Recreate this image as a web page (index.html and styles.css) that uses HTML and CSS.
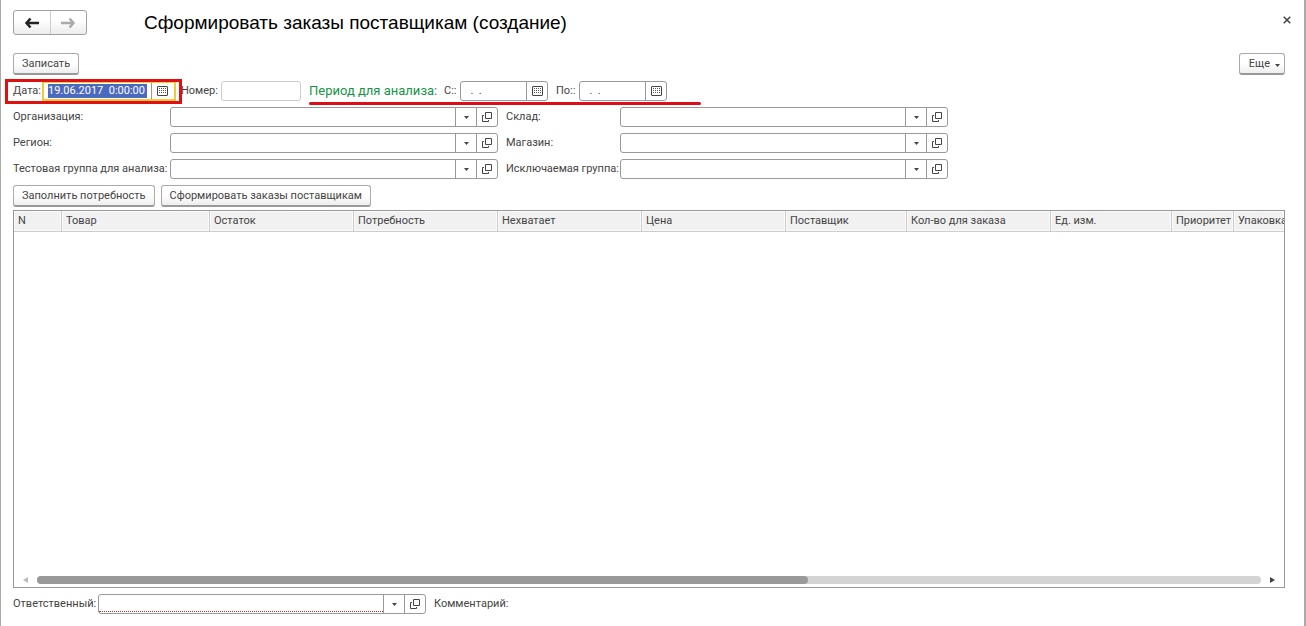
FILE: index.html
```html
<!DOCTYPE html>
<html lang="ru">
<head>
<meta charset="utf-8">
<title>Сформировать заказы поставщикам (создание)</title>
<link rel="stylesheet" href="styles.css">
</head>
<body>
<svg class="defs" aria-hidden="true">
  <symbol id="calendar" viewBox="0 0 11 10">
    <rect x="0.5" y="0.5" width="10" height="9" rx="0.5" fill="none" stroke="#444"/>
    <path d="M2 2.5h7M2 4.5h7M2 6.5h7" stroke="#555" stroke-dasharray="1 1"/>
  </symbol>
  <symbol id="open" viewBox="0 0 10 10">
    <path d="M3.5 0.5h6v6h-6zM2 3.5H0.5v6h6V8" fill="none" stroke="#444"/>
  </symbol>
  <symbol id="down" viewBox="0 0 5 3"><path d="M0 0h5L2.500 3z" fill="#444"/></symbol>
</svg>
<main class="window">
  <header class="header">
    <div class="nav">
      <button class="nav-button" type="button" aria-label="Назад"><svg width="14" height="12" viewBox="0 0 14 12"><path d="M5.500 1.500L1.500 6l4 4.500M1.500 6H14" fill="none" stroke="#222" stroke-width="2.500"/></svg></button>
      <button class="nav-button nav-forward" type="button" aria-label="Вперед"><svg width="14" height="12" viewBox="0 0 14 12"><path d="M8.500 1.500l4 4.500-4 4.500M12.500 6H0" fill="none" stroke="#aaa" stroke-width="2.500"/></svg></button>
    </div>
    <h1 class="title">Сформировать заказы поставщикам (создание)</h1>
    <button class="close" type="button" aria-label="Закрыть"><svg width="8" height="8" viewBox="0 0 8 8"><path d="M0.700 0.700l6.600 6.600M7.300 0.700L0.700 7.300" stroke="#444" stroke-width="1.500"/></svg></button>
  </header>

  <div class="toolbar">
    <button class="button" type="button">Записать</button>
    <button class="button more" type="button">Еще <svg width="5" height="3"><use href="#down"/></svg></button>
  </div>

  <div class="row">
    <div class="marked">
      <label class="label date-label" for="date">Дата:</label>
      <div class="field date-field"><input id="date" class="selected" value="19.06.2017  0:00:00"><button type="button" aria-label="Выбрать дату"><svg width="11" height="10"><use href="#calendar"/></svg></button></div>
    </div>
    <label class="label number-label" for="number">Номер:</label>
    <div class="field number-field"><input id="number" disabled></div>
    <div class="period">
      <span class="period-title">Период для анализа:</span>
      <label class="label from-label" for="from">С::</label>
      <div class="field short"><input id="from" value="  .  ."><button type="button" aria-label="Выбрать начало"><svg width="11" height="10"><use href="#calendar"/></svg></button></div>
      <label class="label to-label" for="to">По::</label>
      <div class="field short"><input id="to" value="  .  ."><button type="button" aria-label="Выбрать конец"><svg width="11" height="10"><use href="#calendar"/></svg></button></div>
    </div>
  </div>

  <div class="form">
    <label class="label" for="org">Организация:</label>
    <div class="field"><input id="org"><button type="button" aria-label="Список"><svg width="5" height="3"><use href="#down"/></svg></button><button type="button" aria-label="Открыть"><svg width="10" height="10"><use href="#open"/></svg></button></div>
    <label class="label second" for="store">Склад:</label>
    <div class="field"><input id="store"><button type="button" aria-label="Список"><svg width="5" height="3"><use href="#down"/></svg></button><button type="button" aria-label="Открыть"><svg width="10" height="10"><use href="#open"/></svg></button></div>
    <label class="label" for="region">Регион:</label>
    <div class="field"><input id="region"><button type="button" aria-label="Список"><svg width="5" height="3"><use href="#down"/></svg></button><button type="button" aria-label="Открыть"><svg width="10" height="10"><use href="#open"/></svg></button></div>
    <label class="label second" for="shop">Магазин:</label>
    <div class="field"><input id="shop"><button type="button" aria-label="Список"><svg width="5" height="3"><use href="#down"/></svg></button><button type="button" aria-label="Открыть"><svg width="10" height="10"><use href="#open"/></svg></button></div>
    <label class="label" for="test">Тестовая группа для анализа:</label>
    <div class="field"><input id="test"><button type="button" aria-label="Список"><svg width="5" height="3"><use href="#down"/></svg></button><button type="button" aria-label="Открыть"><svg width="10" height="10"><use href="#open"/></svg></button></div>
    <label class="label second" for="excluded">Исключаемая группа:</label>
    <div class="field"><input id="excluded"><button type="button" aria-label="Список"><svg width="5" height="3"><use href="#down"/></svg></button><button type="button" aria-label="Открыть"><svg width="10" height="10"><use href="#open"/></svg></button></div>
  </div>

  <div class="actions">
    <button class="button" type="button">Заполнить потребность</button>
    <button class="button" type="button">Сформировать заказы поставщикам</button>
  </div>

  <section class="grid">
    <table class="table">
      <colgroup><col class="c-n"><col class="c-product"><col class="c-m"><col class="c-m"><col class="c-m"><col class="c-m"><col class="c-s"><col class="c-m"><col class="c-s"><col class="c-priority"><col></colgroup>
      <thead><tr><th>N</th><th>Товар</th><th>Остаток</th><th>Потребность</th><th>Нехватает</th><th>Цена</th><th>Поставщик</th><th>Кол-во для заказа</th><th>Ед. изм.</th><th>Приоритет</th><th>Упаковка</th></tr></thead>
    </table>
    <div class="scroll">
      <button type="button" aria-label="Влево"><svg width="5" height="6"><path d="M5 0v6L0 3z" fill="#bbb"/></svg></button>
      <div class="track"><div class="thumb"></div></div>
      <button type="button" aria-label="Вправо"><svg width="5" height="6"><path d="M0 0v6l5-3z" fill="#444"/></svg></button>
    </div>
  </section>

  <footer class="row">
    <label class="label person-label" for="person">Ответственный:</label>
    <div class="field person"><input id="person" class="required"><button type="button" aria-label="Список"><svg width="5" height="3"><use href="#down"/></svg></button><button type="button" aria-label="Открыть"><svg width="10" height="10"><use href="#open"/></svg></button></div>
    <span class="label second">Комментарий:</span>
  </footer>
</main>
</body>
</html>
```
FILE: styles.css
```css
* { box-sizing: border-box; }
body {
  margin: 0;
  background: #fff;
  color: #444;
  font: 11px/16px Roboto, "Liberation Sans", sans-serif;
}
button, input { font: inherit; color: inherit; margin: 0; padding: 0; border: 0; background: none; }
svg { display: block; flex: none; }
.defs { position: absolute; width: 0; height: 0; }

.window {
  display: flex;
  flex-direction: column;
  min-height: 100vh;
  padding: 10px 19px 12px 12px;
  border-left: 1px solid #aaa;
  border-right: 2px solid #aaa;
}

.header { display: flex; align-items: center; height: 25px; margin-bottom: 18px; }
.nav {
  display: flex;
  width: 74px;
  height: 25px;
  border: 1px solid #a0a0a0;
  border-radius: 3px;
  background: linear-gradient(#fff 40%, #ececec);
}
.nav-button { flex: 1; display: flex; align-items: center; justify-content: center; }
.nav-forward { border-left: 1px solid #ccc; }
.title {
  flex: 1;
  margin: 0 0 0 57px;
  color: #000;
  font: 19px/24px "Liberation Sans", sans-serif;
}
.close { display: flex; align-items: center; justify-content: center; width: 16px; height: 16px; margin: 0 -10px 6px 0; }

.toolbar { display: flex; justify-content: space-between; margin-bottom: 6px; }
.button {
  height: 22px;
  padding: 0 8px;
  border: 1px solid #aaa;
  border-bottom: 2px solid #999;
  border-radius: 3px;
  background: linear-gradient(#fff 50%, #eee);
  white-space: nowrap;
}
.more { display: flex; align-items: center; gap: 5px; padding: 0 4px 0 9px; }
.more svg { margin-top: 3px; }

.row { display: flex; align-items: center; }
.label { white-space: nowrap; }
.second { padding-left: 8px; }
.field {
  display: flex;
  height: 20px;
  border: 1px solid #999;
  border-radius: 3px;
  background: #fff;
}
.field input { flex: 1; min-width: 0; padding: 0 4px; outline: 0; white-space: pre; }
.field button { display: flex; align-items: center; justify-content: center; width: 21px; border-left: 1px solid #999; }

.marked { position: relative; display: flex; align-items: center; margin-right: 1px; }
.marked::after {
  content: "";
  position: absolute;
  inset: -2px -6px -3px -8px;
  border: 3px solid #e01010;
  pointer-events: none;
}
.date-label { width: 29px; }
.date-field { width: 134px; padding-right: 2px; border: 2px solid #f3c93c; border-radius: 0; }
.date-field button { margin-left: 4px; }
.field .selected { margin: 1px 0 1px 4px; padding: 0; background: #4c69c0; color: #fff; }
.number-label { width: 44px; padding-left: 4px; }
.number-field { width: 80px; border-color: #ccc; }
.period { position: relative; display: flex; align-items: center; margin-left: 8px; }
.period::after {
  content: "";
  position: absolute;
  left: 0;
  right: -34px;
  bottom: -4px;
  height: 3px;
  border-radius: 2px;
  background: #dc0f18;
}
.period-title { width: 135px; color: #159447; font-size: 13px; white-space: nowrap; }
.from-label { width: 16px; }
.to-label { width: 31px; padding-left: 8px; }
.short { width: 88px; }

.form {
  display: grid;
  grid-template-columns: 157px 328px 122px 328px;
  align-items: center;
  gap: 6px 0;
  margin: 6px 0;
}
.actions { display: flex; gap: 6px; margin-bottom: 3px; }

.grid {
  flex: 1;
  display: flex;
  flex-direction: column;
  justify-content: space-between;
  margin-bottom: 6px;
  border: 1px solid #999;
  overflow: hidden;
}
.table { width: 100%; table-layout: fixed; border-collapse: separate; border-spacing: 0; }
.table th {
  height: 21px;
  padding: 0 0 0 4px;
  border-right: 1px solid #ccc;
  border-bottom: 1px solid #ccc;
  background: #f1f1f1;
  box-shadow: inset 0 0 0 1px #fafafa;
  font-weight: 400;
  text-align: left;
  white-space: nowrap;
  overflow: hidden;
}
.table th:last-child { border-right: 0; }
.c-n { width: 48px; }
.c-product { width: 148px; }
.c-m { width: 144px; }
.c-s { width: 121px; }
.c-priority { width: 62px; }

.scroll { display: flex; align-items: center; padding: 0 9px 3px; }
.scroll button { display: flex; width: 5px; height: 8px; align-items: center; }
.track { flex: 1; height: 8px; margin: 0 9px; border-radius: 4px; background: #d4d4d4; }
.thumb { width: 63%; height: 8px; border-radius: 4px; background: #999; }

.person-label { width: 85px; }
.person { width: 328px; }
.field .required { margin-bottom: 1px; border-bottom: 1px dotted #b03030; }
```
